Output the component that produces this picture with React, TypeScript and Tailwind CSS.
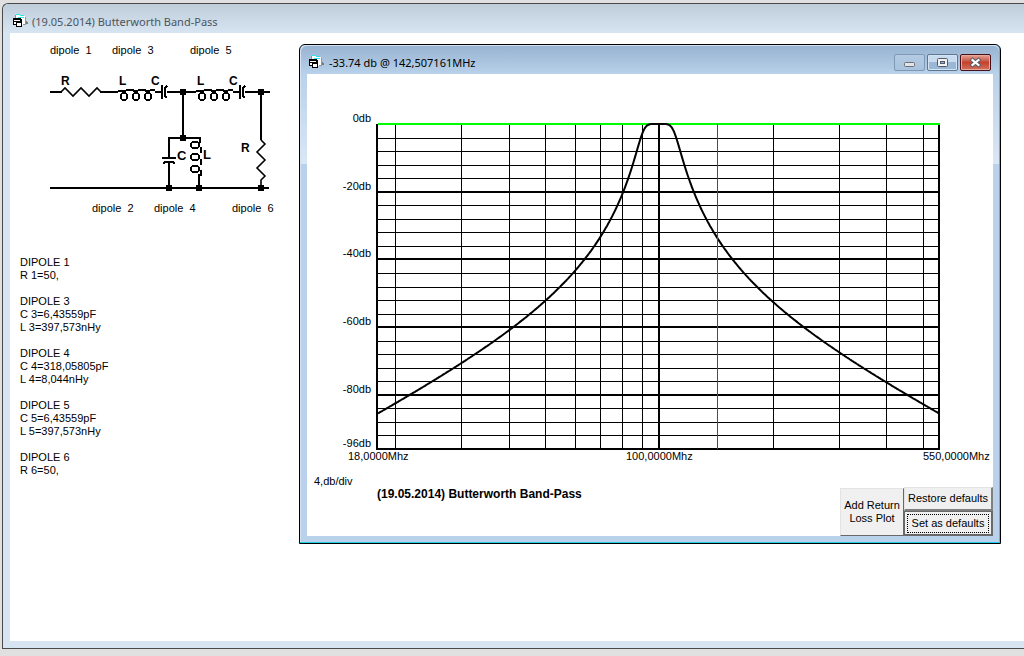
import React from "react";

const TITLE = "(19.05.2014) Butterworth Band-Pass";

const dipoles = [
  { name: "DIPOLE 1", values: ["R 1=50,"] },
  { name: "DIPOLE 3", values: ["C 3=6,43559pF", "L 3=397,573nHy"] },
  { name: "DIPOLE 4", values: ["C 4=318,05805pF", "L 4=8,044nHy"] },
  { name: "DIPOLE 5", values: ["C 5=6,43559pF", "L 5=397,573nHy"] },
  { name: "DIPOLE 6", values: ["R 6=50,"] },
];

// plot area
const X0 = 71;
const X1 = 632;
const Y0 = 50;
const Y1 = 375;
const F_MIN = 18;
const F_MAX = 550;
const DB_MAX = 96;

const xOf = (f: number) =>
  X0 + ((X1 - X0) * Math.log(f / F_MIN)) / Math.log(F_MAX / F_MIN);
const yOf = (db: number) => Y0 + ((Y1 - Y0) * db) / DB_MAX;

// third order band-pass, centre 99.5 MHz, 20 MHz wide
const loss = (f: number) => {
  const x = (f / 99.5 - 99.5 / f) * (99.5 / 20.015);
  return 10 * Math.log10(1 + Math.pow(x, 6));
};

const freqs = [20, 30, 40, 50, 60, 70, 80, 90, 200, 300, 400, 500];
const levels = Array.from({ length: 23 }, (_, i) => (i + 1) * 4);

const curve = Array.from({ length: X1 - X0 + 1 }, (_, i) => {
  const f = F_MIN * Math.pow(F_MAX / F_MIN, i / (X1 - X0));
  return `${X0 + i},${yOf(loss(f)).toFixed(1)}`;
}).join(" ");

function FormIcon() {
  return (
    <svg
      width="16"
      height="14"
      viewBox="0 0 16 14"
      shapeRendering="crispEdges"
      className="shrink-0"
      aria-hidden="true"
    >
      <path d="M3 1h4v1h5v9H9V5H3z" fill="#fff" />
      <path d="M2 1h1v3H2zM12 3h1v8h-3v-1h2z" fill="#8d959e" />
      <path d="M13 7h1v1h1v2h-2z" fill="#777c82" />
      <path d="M3 0h4v1h4v1H7V1H3zM5 3h6v1H5z" fill="#2ee6ee" />
      <path d="M0 4h8v1h1v8H3v-2H0z" fill="#000" />
      <path d="M1 6h6v1H1zM1 8h2v2H1zM4 9h4v3H4z" fill="#fff" />
    </svg>
  );
}

function Coil({ x }: { x: number }) {
  return (
    <g transform={`translate(${x} 0)`}>
      <path d="M0 91h3M8 90h8M20 90h8M32 90h5M37 92h7" />
      <path d="M3 91h5M15 91h5M27 91h5" />
      <rect x="3" y="93" width="6" height="7" rx="2" strokeWidth="1.5" />
      <rect x="15" y="93" width="6" height="7" rx="2" strokeWidth="1.5" />
      <rect x="27" y="93" width="6" height="7" rx="2" strokeWidth="1.5" />
      <path d="M44 85v14M49 86l-2 2v8l2 2" />
    </g>
  );
}

function Circuit() {
  return (
    <svg
      width="250"
      height="184"
      viewBox="40 38 250 184"
      fill="none"
      stroke="#000"
      strokeWidth="2"
      className="font-['Liberation_Sans',Arial,sans-serif]"
    >
      <g shapeRendering="crispEdges">
        <path d="M50 92h12M100 92h18M167 92h29M245 92h25M183 92v46M261 92v48M50 188h219" />
        <path d="M169 158v-20h32M162 158h14M163 164l2-2h8l2 2M169 162v26" />
        <path d="M200 138v4l1 1M201 147v6M201 159v6M201 170v5h-2v13" />
        <Coil x={118} />
        <Coil x={196} />
        <rect x="191" y="142" width="8" height="6" rx="3" strokeWidth="1.5" />
        <rect x="191" y="154" width="8" height="6" rx="3" strokeWidth="1.5" />
        <rect x="191" y="166" width="8" height="6" rx="3" strokeWidth="1.5" />
      </g>
      <path
        d="M61 92l4-4 8 8 8-8 8 8 8-8 4 4M261 140l4 4-8 8 8 8-8 8 8 8-4 4v6"
        strokeWidth="1.6"
      />
      <g fill="#000" stroke="none">
        <path d="M180 89h6v6h-6zM258 89h6v6h-6zM180 135h6v6h-6zM166 185h6v6h-6zM196 185h6v6h-6zM258 185h6v6h-6z" />
        <g fontSize="12" fontWeight="bold">
          <text x="61" y="85">R</text>
          <text x="119" y="85">L</text>
          <text x="151" y="85">C</text>
          <text x="197" y="85">L</text>
          <text x="229" y="85">C</text>
          <text x="241" y="152">R</text>
        </g>
        <g fontSize="13" fontWeight="bold">
          <text x="177" y="160">C</text>
          <text x="203" y="159">L</text>
        </g>
        <g fontSize="11">
          <text x="50" y="54">dipole{"\u00a0\u00a0"}1</text>
          <text x="112" y="54">dipole{"\u00a0\u00a0"}3</text>
          <text x="190" y="54">dipole{"\u00a0\u00a0"}5</text>
          <text x="92" y="212">dipole{"\u00a0\u00a0"}2</text>
          <text x="154" y="212">dipole{"\u00a0\u00a0"}4</text>
          <text x="232" y="212">dipole{"\u00a0\u00a0"}6</text>
        </g>
      </g>
    </svg>
  );
}

function Plot() {
  return (
    <svg
      viewBox="0 0 686 401"
      className="block w-full font-['Liberation_Sans',Arial,sans-serif]"
      fontSize="11"
    >
      <g stroke="#000" shapeRendering="crispEdges">
        {freqs.map((f) => (
          <line
            key={f}
            x1={Math.floor(xOf(f)) + 0.5}
            x2={Math.floor(xOf(f)) + 0.5}
            y1={Y0}
            y2={Y1}
          />
        ))}
        {levels.map((db) => {
          const major = db % 20 === 0;
          const y = Math.round(yOf(db)) + (major ? 0 : 0.5);
          return (
            <line
              key={db}
              x1={X0}
              x2={X1}
              y1={y}
              y2={y}
              strokeWidth={major ? 2 : 1}
            />
          );
        })}
        <path
          d={`M70 ${Y0}V${Y1}H${X1}V${Y0}M352 ${Y0}V${Y1}`}
          fill="none"
          strokeWidth="2"
        />
        <line x1={X0} x2={X1 + 1} y1={Y0} y2={Y0} stroke="#00ff00" strokeWidth="2" />
      </g>
      <polyline points={curve} fill="none" stroke="#000" strokeWidth="2" />
      <line
        x1="410.5"
        x2="410.5"
        y1={Y0}
        y2={Y1}
        stroke="#ff0000"
        shapeRendering="crispEdges"
      />
      <g textAnchor="end">
        <text x="64" y="48">0db</text>
        <text x="64" y="116">-20db</text>
        <text x="64" y="183">-40db</text>
        <text x="64" y="251">-60db</text>
        <text x="64" y="319">-80db</text>
        <text x="64" y="373">-96db</text>
      </g>
      <text x="41" y="386">18,0000Mhz</text>
      <text x="319" y="386">100,0000Mhz</text>
      <text x="616" y="386">550,0000Mhz</text>
    </svg>
  );
}

function WindowButtons() {
  return (
    <div className="flex gap-[2px]">
      <button
        aria-label="Minimize"
        className="flex h-[17px] w-[31px] items-center justify-center rounded-[2px] border border-[#7f98b6] bg-linear-to-b from-[#b3cae2] to-[#a9c3de]"
      >
        <svg width="11" height="5" viewBox="0 0 11 5" className="mt-1">
          <rect x="0.5" y="0.5" width="10" height="4" rx="1" fill="#e4e4e4" stroke="#6a7078" />
        </svg>
      </button>
      <button
        aria-label="Maximize"
        className="flex h-[17px] w-[31px] items-center justify-center rounded-[2px] border border-[#5f7592] bg-linear-to-b from-[#c9dbee] from-50% to-[#9ab8d6] to-50% ring-1 ring-inset ring-[#d4e4f4]"
      >
        <svg width="11" height="9" viewBox="0 0 11 9">
          <rect x="0.5" y="0.5" width="10" height="8" rx="1" fill="#f2f2f2" stroke="#535b68" />
          <rect x="3.5" y="3.5" width="4" height="2" fill="#8fb3d8" stroke="#535b68" />
        </svg>
      </button>
      <button
        aria-label="Close"
        className="flex h-[17px] w-[31px] items-center justify-center rounded-[2px] border border-[#43101c] bg-linear-to-b from-[#e3a398] via-[#c3422b] via-50% to-[#d3705c] ring-1 ring-inset ring-[#e8a89c]"
      >
        <svg width="13" height="11" viewBox="0 0 13 11">
          <path d="M3.5 3l6 5M9.5 3l-6 5" stroke="#535b68" strokeWidth="4" strokeLinecap="square" />
          <path d="M3.5 3l6 5M9.5 3l-6 5" stroke="#fff" strokeWidth="2.2" strokeLinecap="square" />
        </svg>
      </button>
    </div>
  );
}

function PlotWindow() {
  return (
    <section className="absolute top-[11px] right-[23px] left-[289px] rounded-t-md border border-black bg-[#b9d1ea] shadow-[inset_-1px_-1px_0_#22cfe8,inset_1px_1px_0_#d3e3f3]">
      <header className="mx-px mt-px flex h-7 items-center rounded-t-md bg-linear-to-b from-[#98b4d1] to-[#b9d1ea] px-2">
        <div className="pt-1">
          <FormIcon />
        </div>
        <h2 className="ml-1 flex-1 pt-[5px] font-['Noto_Sans',sans-serif] text-[11px] leading-4 text-black">
          -33.74 db @ 142,507161MHz
        </h2>
        <div className="pt-[5px]">
          <WindowButtons />
        </div>
      </header>
      <div className="mx-px mb-px bg-linear-to-b from-[#b9d1ea] to-[#dae7f5] bg-size-[100%_90px] bg-no-repeat px-[6px] pb-[6px]">
        <div className="bg-white">
          <Plot />
          <div className="flex items-end justify-between">
            <div className="self-start pl-[7px]">
              <p>4,db/div</p>
              <p className="pl-[63px] text-[12px] font-bold">{TITLE}</p>
            </div>
            <div className="flex pt-3">
              <button className="h-12 w-16 self-end border border-t-[#e3e3e3] border-r-[#696969] border-b-[#696969] border-l-[#e3e3e3] bg-[#f0f0f0] text-center">
                Add Return
                <br />
                Loss Plot
              </button>
              <div className="flex flex-col">
                <button className="h-6 w-[89px] border-t border-r-2 border-b-2 border-l border-t-[#e3e3e3] border-r-[#808080] border-b-[#808080] border-l-[#e3e3e3] bg-[#f0f0f0]">
                  Restore defaults
                </button>
                <button className="h-[25px] w-[89px] border border-r-2 border-b-2 border-[#696969] bg-[#f0f0f0] p-[2px]">
                  <span className="block border border-dotted border-black leading-[17px]">
                    Set as defaults
                  </span>
                </button>
              </div>
            </div>
          </div>
        </div>
      </div>
    </section>
  );
}

export default function App() {
  return (
    <div className="flex min-h-screen flex-col overflow-hidden bg-[#e0e0e0] pt-[3px] pb-[7px] pl-[2px] font-['Liberation_Sans',Arial,sans-serif] text-[11px] leading-[13px] text-black">
      <main className="flex flex-1 flex-col rounded-tl-md border border-r-0 border-[#4a4a4a] bg-[#d7e4f1] pb-[7px] pl-[7px]">
        <header className="-ml-[7px] flex h-[29px] items-center rounded-tl-md bg-linear-to-b from-[#bfcddb] to-[#d7e4f1] pt-[5px] pl-[10px]">
          <FormIcon />
          <h1 className="ml-[3px] pt-px font-['Noto_Sans',sans-serif] text-[11px] leading-4 text-[#4c5560]">
            {TITLE}
          </h1>
        </header>
        <div className="relative flex-1 bg-white pt-[5px]">
          <div className="pl-[30px]">
            <Circuit />
          </div>
          <div className="mt-[34px] flex flex-col gap-[13px] pl-[10px]">
            {dipoles.map((d) => (
              <div key={d.name}>
                <h3>{d.name}</h3>
                {d.values.map((v) => (
                  <p key={v}>{v}</p>
                ))}
              </div>
            ))}
          </div>
          <PlotWindow />
        </div>
      </main>
    </div>
  );
}
